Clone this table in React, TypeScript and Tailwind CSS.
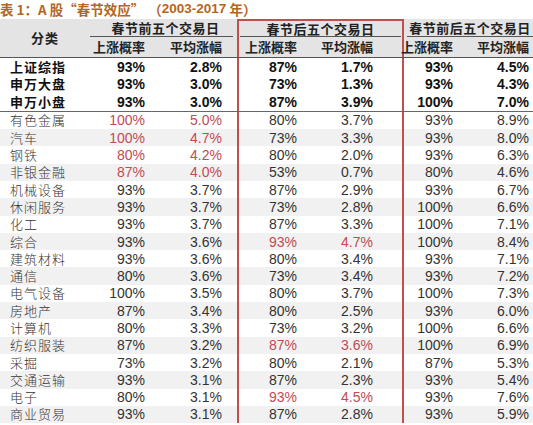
import React from "react";

type Row = { name: string; v: string[]; red?: number[] };

const top: Row[] = [
  { name: "上证综指", v: ["93%", "2.8%", "87%", "1.7%", "93%", "4.5%"] },
  { name: "申万大盘", v: ["93%", "3.0%", "73%", "1.3%", "93%", "4.3%"] },
  { name: "申万小盘", v: ["93%", "3.0%", "87%", "3.9%", "100%", "7.0%"] },
];

const rows: Row[] = [
  { name: "有色金属", v: ["100%", "5.0%", "80%", "3.7%", "93%", "8.9%"], red: [0, 1] },
  { name: "汽车", v: ["100%", "4.7%", "73%", "3.3%", "93%", "8.0%"], red: [0, 1] },
  { name: "钢铁", v: ["80%", "4.2%", "80%", "2.0%", "93%", "6.3%"], red: [0, 1] },
  { name: "非银金融", v: ["87%", "4.0%", "53%", "0.7%", "80%", "4.6%"], red: [0, 1] },
  { name: "机械设备", v: ["93%", "3.7%", "87%", "2.9%", "93%", "6.7%"] },
  { name: "休闲服务", v: ["93%", "3.7%", "73%", "2.8%", "100%", "6.6%"] },
  { name: "化工", v: ["93%", "3.7%", "87%", "3.3%", "100%", "7.1%"] },
  { name: "综合", v: ["93%", "3.6%", "93%", "4.7%", "100%", "8.4%"], red: [2, 3] },
  { name: "建筑材料", v: ["93%", "3.6%", "80%", "3.4%", "93%", "7.1%"] },
  { name: "通信", v: ["80%", "3.6%", "73%", "3.4%", "93%", "7.2%"] },
  { name: "电气设备", v: ["100%", "3.5%", "80%", "3.7%", "100%", "7.3%"] },
  { name: "房地产", v: ["87%", "3.4%", "80%", "2.5%", "93%", "6.0%"] },
  { name: "计算机", v: ["80%", "3.3%", "73%", "3.2%", "100%", "6.6%"] },
  { name: "纺织服装", v: ["87%", "3.2%", "87%", "3.6%", "100%", "6.9%"], red: [2, 3] },
  { name: "采掘", v: ["73%", "3.2%", "80%", "2.1%", "87%", "5.3%"] },
  { name: "交通运输", v: ["93%", "3.1%", "87%", "2.3%", "93%", "5.4%"] },
  { name: "电子", v: ["80%", "3.1%", "93%", "4.5%", "93%", "7.6%"], red: [2, 3] },
  { name: "商业贸易", v: ["93%", "3.1%", "87%", "2.8%", "93%", "5.9%"] },
];

// column widths + right padding so the numbers line up with the picture
const cols = [
  "w-[70px] pr-[15px]",
  "w-[77px] pr-[15px]",
  "w-[78px] pr-[18px] border-l-2 border-[#c0504d]",
  "w-[89px] pr-[29px] border-r-2 border-[#c0504d]",
  "w-[66px] pr-[17px]",
  "w-[63px] pr-[4px]",
];

const cjk = "font-['Noto_Sans_CJK_SC',sans-serif]";
const num = "font-['Liberation_Sans',Arial,sans-serif]";

function DataRow({ r, bold, shade, h }: { r: Row; bold?: boolean; shade?: boolean; h: string }) {
  return (
    <div className={`flex ${h} ${shade ? "bg-[#f1f1f1]" : "bg-white"}`}>
      <div
        className={`w-[90px] h-full flex items-center pl-[10px] text-[13px] leading-[16px] tracking-[1px] ${cjk} ${
          bold ? "font-bold text-[#111]" : "font-light text-[#333]"
        }`}
      >
        {r.name}
      </div>
      {r.v.map((val, i) => (
        <div
          key={i}
          className={`${cols[i]} h-full flex items-center justify-end text-[14px] leading-[16px] ${num} ${
            r.red?.includes(i) ? "text-[#c24a55]" : bold ? "text-[#111]" : "text-[#333]"
          } ${bold ? "font-bold" : ""}`}
        >
          {val}
        </div>
      ))}
    </div>
  );
}

export default function App() {
  return (
    <div className="w-[533px] h-[425px] overflow-hidden bg-white">
      {/* title */}
      <div className={`h-[19px] pb-[1px] flex items-center text-[13.5px] font-bold text-[#b4661f] leading-[16px] whitespace-nowrap ${cjk}`}>
        <span>表 1：A 股“春节效应”</span>
        <span className="ml-[4px]">（</span>
        <span className={num}>2003-2017</span>
        <span>&nbsp;年）</span>
      </div>

      {/* header */}
      <div className={`flex bg-[#e4e4e4] border-b border-[#555] text-[13px] leading-[16px] font-bold text-[#222] whitespace-nowrap ${cjk}`}>
        <div className="w-[90px] flex items-center justify-center tracking-[1px]">分类</div>

        <div className="flex-1 flex flex-col">
          <div className="h-[18px] flex">
            <div className="w-[147px] flex">
              <div className="flex-1 flex items-center justify-center mr-[4px] pl-[8px] border-b border-[#555] tracking-[0.5px]">
                春节前五个交易日
              </div>
            </div>
            <div className="w-[167px] flex border-l-2 border-r-2 border-t-2 border-[#c0504d]">
              <div className="flex-1 flex items-center justify-center mx-[1px] border-b border-[#555] tracking-[0.5px]">
                春节后五个交易日
              </div>
            </div>
            <div className="w-[129px] flex">
              <div className="flex-1 flex items-center justify-center ml-[3px] border-b border-[#555] tracking-[0.5px]">
                春节前后五个交易日
              </div>
            </div>
          </div>
          <div className="h-[20px] flex">
            {["上涨概率", "平均涨幅", "上涨概率", "平均涨幅", "上涨概率", "平均涨幅"].map((t, i) => (
              <div key={i} className={`${cols[i]} flex items-center justify-end`}>
                {t}
              </div>
            ))}
          </div>
        </div>
      </div>

      {/* index rows */}
      <div className="border-b border-[#666]">
        {top.map((r) => (
          <DataRow key={r.name} r={r} bold h="h-[17.6px]" />
        ))}
      </div>

      {/* industry rows */}
      {rows.map((r, i) => (
        <DataRow key={r.name} r={r} shade={i % 2 === 1} h="h-[17.3px]" />
      ))}
    </div>
  );
}
